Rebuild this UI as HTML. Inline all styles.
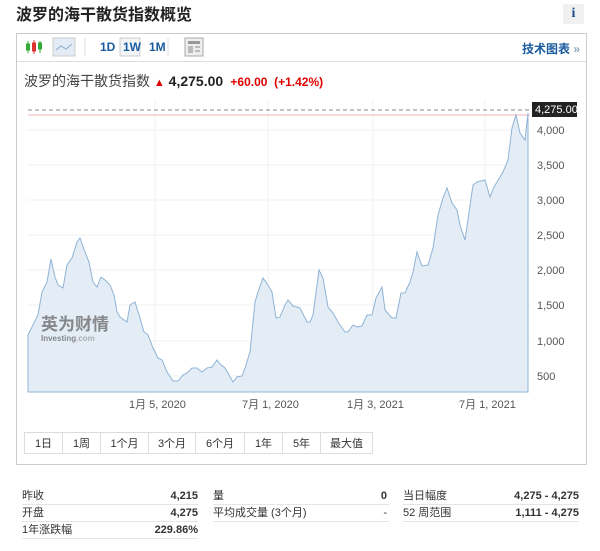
<!DOCTYPE html>
<html><head><meta charset="utf-8"><style>
body{margin:0;width:600px;height:551px;background:#fff;font-family:"Liberation Sans","Noto Sans CJK SC",sans-serif;position:relative;overflow:hidden;color:#333}
.a{position:absolute}
.rb{position:absolute;top:432px;height:22px;border:1px solid #ddd;font-size:11px;line-height:22px;text-align:center;color:#333;box-sizing:border-box}
.row{position:absolute;font-size:11px;height:16px;line-height:16px;border-bottom:1px solid #e5e5e5}
.row span{position:absolute;top:0;line-height:16px}
</style></head><body>
<div class="a" style="left:16px;top:1px;font-size:16px;font-weight:bold;color:#222">波罗的海干散货指数概览</div>
<div class="a" style="left:563px;top:4px;width:21px;height:20px;background:#f0f0f0;font:bold 14px 'Liberation Serif',serif;color:#1a4d8a;text-align:center;line-height:20px">i</div>
<div class="a" style="left:16px;top:33px;width:571px;height:432px;border:1px solid #ccc;box-sizing:border-box"></div>
<div class="a" style="left:17px;top:61px;width:569px;height:1px;background:#ddd"></div>
<svg class="a" style="left:24px;top:37px" width="190" height="20">
<g stroke="#3a3" fill="#3a3"><line x1="4" y1="4" x2="4" y2="16"/><rect x="2.5" y="7" width="3" height="6"/><line x1="16" y1="4" x2="16" y2="16"/><rect x="14.5" y="6" width="3" height="6"/></g>
<g stroke="#d33" fill="#d33"><line x1="10" y1="3" x2="10" y2="17"/><rect x="8.5" y="6" width="3" height="8"/></g>
<rect x="29" y="1" width="22" height="18" fill="#e3ebf4" stroke="#ccc"/><polyline points="32,13 37,9 42,12 48,7" fill="none" stroke="#8aaccc"/>
<line x1="61" y1="1" x2="61" y2="19" stroke="#ddd"/>
<rect x="96" y="1" width="20" height="18" fill="#f2f5f8" stroke="#ccc"/>
<line x1="144" y1="1" x2="144" y2="19" stroke="#ddd"/>
<rect x="161" y="1" width="18" height="18" fill="#eee" stroke="#aaa"/><rect x="164" y="4" width="12" height="3" fill="#999"/><rect x="164" y="9" width="5" height="7" fill="#bbb"/><rect x="171" y="9" width="5" height="2" fill="#bbb"/><rect x="171" y="13" width="5" height="2" fill="#bbb"/>
</svg>
<div class="a" style="left:100px;top:40px;font-size:12px;font-weight:bold;color:#1a5b9e">1D</div>
<div class="a" style="left:123px;top:40px;font-size:12px;font-weight:bold;color:#1a5b9e">1W</div>
<div class="a" style="left:149px;top:40px;font-size:12px;font-weight:bold;color:#1a5b9e">1M</div>
<div class="a" style="left:522px;top:40px;font-size:12px;font-weight:bold;color:#1a5b9e">技术图表 <span style="color:#8ab">»</span></div>
<div class="a" style="left:24px;top:71px;font-size:14px;color:#444">波罗的海干散货指数 <span style="color:#d00;font-size:11px">▲</span><b style="color:#222"> 4,275.00</b> <b style="color:#d00;font-size:12px">&nbsp;+60.00 &nbsp;(+1.42%)</b></div>
<svg class="a" style="left:0;top:0" width="600" height="420">
<g stroke="#f0f0f0"><line x1="28" y1="130" x2="530" y2="130"/><line x1="28" y1="165" x2="530" y2="165"/><line x1="28" y1="200" x2="530" y2="200"/><line x1="28" y1="235" x2="530" y2="235"/><line x1="28" y1="270" x2="530" y2="270"/><line x1="28" y1="305" x2="530" y2="305"/><line x1="28" y1="341" x2="530" y2="341"/><line x1="28" y1="376" x2="530" y2="376"/><line x1="155" y1="100" x2="155" y2="392"/><line x1="268" y1="100" x2="268" y2="392"/><line x1="373" y1="100" x2="373" y2="392"/><line x1="485" y1="100" x2="485" y2="392"/></g>
<line x1="28" y1="115" x2="530" y2="115" stroke="#f3b0b0"/>
<line x1="28" y1="110" x2="530" y2="110" stroke="#888" stroke-dasharray="4,3"/>
<polygon fill="#e4edf6" stroke="#8fb3d6" stroke-width="1" points="28,392 28,335 38,315 42,292 47,282 51,259 55,277 58,285 63,288 67,265 72,258 77,242 80,238 85,252 89,262 93,282 97,287 101,277 105,280 110,285 114,295 117,312 120,317 127,322 130,305 135,302 140,318 144,332 148,335 153,348 158,358 162,360 167,372 173,381 178,381 183,375 187,373 192,368 197,368 202,372 207,368 212,367 217,360 220,364 225,368 233,382 237,377 242,376 245,368 250,352 255,302 258,292 263,278 268,285 272,292 276,318 280,317 285,305 288,300 293,306 297,307 300,308 307,322 310,322 313,315 319,270 323,278 328,307 333,313 338,322 345,332 348,332 353,325 357,327 362,326 367,315 372,315 376,298 382,287 385,310 392,318 396,318 401,293 405,293 410,282 413,272 417,252 422,266 428,265 433,248 438,215 443,198 447,188 452,203 457,210 460,225 465,240 473,185 477,182 485,180 490,197 494,187 503,172 508,160 512,128 516,115 520,133 525,140 528,113 528,392"/>
<rect x="532" y="102" width="45" height="15" fill="#222"/>
<text x="535" y="113" font-size="11" fill="#fff" font-family="Liberation Sans">4,275.00</text>
<g font-size="11" fill="#555" font-family="Liberation Sans"><text x="537" y="134">4,000</text><text x="537" y="169">3,500</text><text x="537" y="204">3,000</text><text x="537" y="239">2,500</text><text x="537" y="274">2,000</text><text x="537" y="309">1,500</text><text x="537" y="345">1,000</text><text x="537" y="380">500</text></g>
<g font-size="11" fill="#555" font-family="Liberation Sans,Noto Sans CJK SC"><text x="129" y="408">1月 5, 2020</text><text x="242" y="408">7月 1, 2020</text><text x="347" y="408">1月 3, 2021</text><text x="459" y="408">7月 1, 2021</text></g>
<text x="41" y="330" font-size="17" font-weight="bold" fill="#666" opacity="0.75" font-family="Noto Sans CJK SC,sans-serif">英为财情</text>
<text x="41" y="341" font-size="8" font-weight="bold" fill="#666" opacity="0.75" font-family="Liberation Sans">Investing<tspan fill="#999">.com</tspan></text>
</svg>
<div class="rb" style="left:24px;width:39px">1日</div>
<div class="rb" style="left:62px;width:39px">1周</div>
<div class="rb" style="left:100px;width:49px">1个月</div>
<div class="rb" style="left:148px;width:48px">3个月</div>
<div class="rb" style="left:195px;width:50px">6个月</div>
<div class="rb" style="left:244px;width:39px">1年</div>
<div class="rb" style="left:282px;width:39px">5年</div>
<div class="rb" style="left:320px;width:53px">最大值</div>
<div class="row" style="left:22px;top:488px;width:176px"><span style="left:0">昨收</span><span style="right:0;font-weight:bold">4,215</span></div>
<div class="row" style="left:22px;top:505px;width:176px"><span style="left:0">开盘</span><span style="right:0;font-weight:bold">4,275</span></div>
<div class="row" style="left:22px;top:522px;width:176px"><span style="left:0">1年涨跌幅</span><span style="right:0;font-weight:bold">229.86%</span></div>
<div class="row" style="left:213px;top:488px;width:176px"><span style="left:0">量</span><span style="right:2px;font-weight:bold">0</span></div>
<div class="row" style="left:213px;top:505px;width:176px"><span style="left:0">平均成交量 (3个月)</span><span style="right:2px">-</span></div>
<div class="row" style="left:403px;top:488px;width:176px"><span style="left:0">当日幅度</span><span style="right:0;font-weight:bold">4,275 - 4,275</span></div>
<div class="row" style="left:403px;top:505px;width:176px"><span style="left:0">52 周范围</span><span style="right:0;font-weight:bold">1,111 - 4,275</span></div>
</body></html>
